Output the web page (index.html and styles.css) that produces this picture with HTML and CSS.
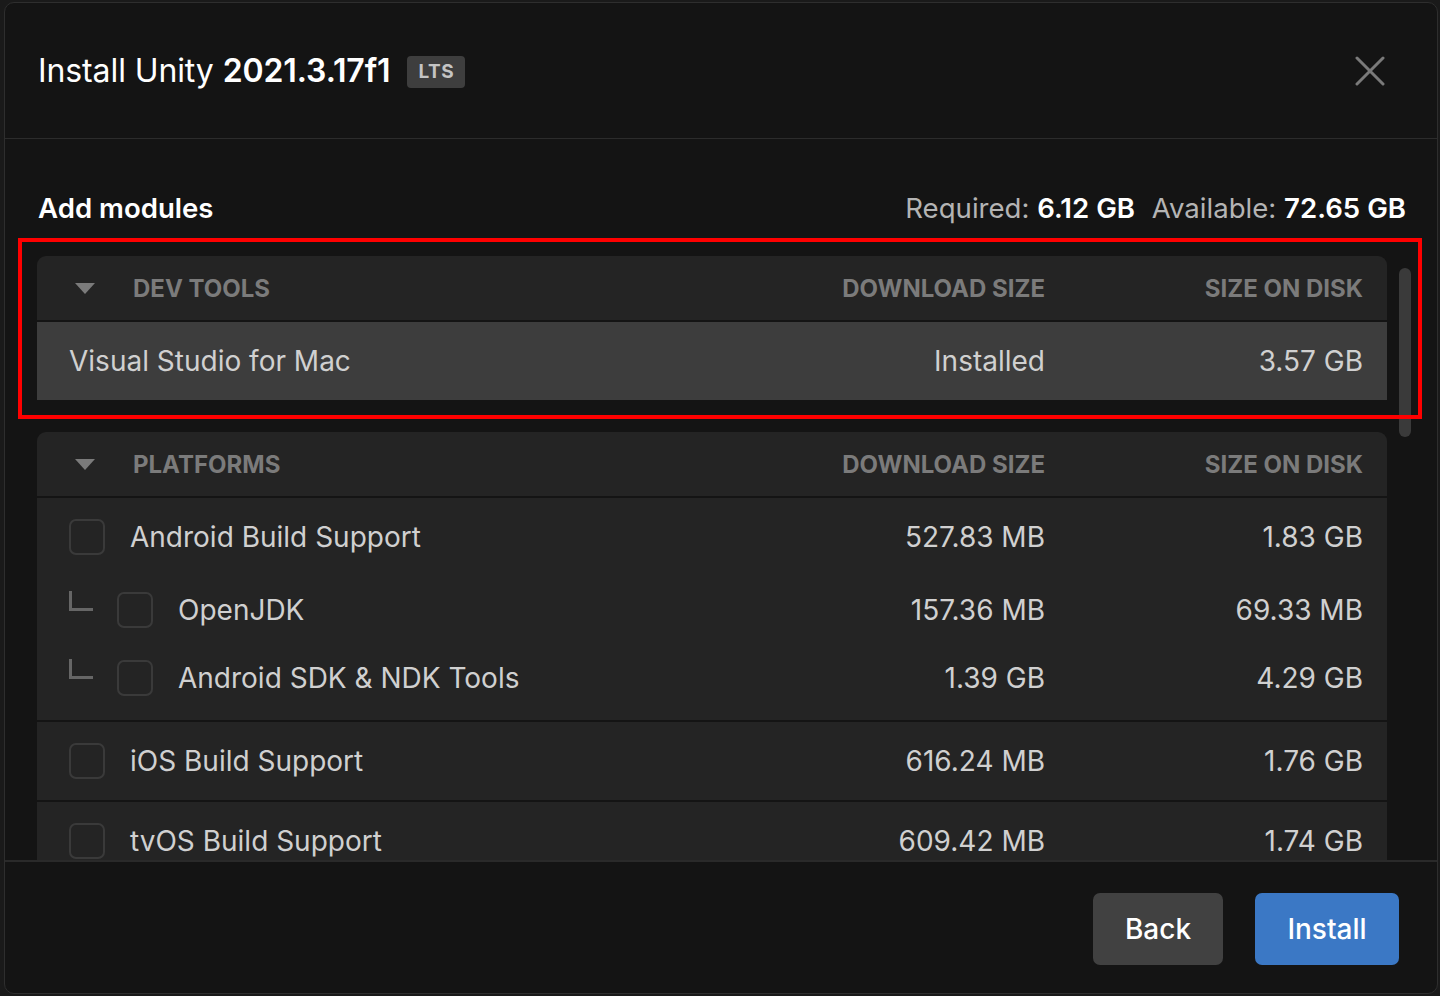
FILE: index.html
```html
<!DOCTYPE html>
<html lang="en">
<head>
<meta charset="utf-8">
<title>Install Unity 2021.3.17f1</title>
<link rel="stylesheet" href="styles.css">
</head>
<body>
<div class="dialog">
  <header class="dlg-header">
    <h1 class="title"><span class="title-light">Install Unity</span> <span class="title-bold">2021.3.17f1</span></h1>
    <span class="badge">LTS</span>
    <button class="close" aria-label="Close">
      <svg width="30" height="30" viewBox="0 0 30 30"><path d="M2 2 L28 28 M28 2 L2 28" stroke="#7a7a7a" stroke-width="3" stroke-linecap="round" fill="none"/></svg>
    </button>
  </header>

  <main class="content">
    <div class="summary">
      <h2 class="summary-title">Add modules</h2>
      <div class="space">
        <span class="lbl">Required:</span> <b>6.12 GB</b>
        <span class="lbl avail">Available:</span> <b>72.65 GB</b>
      </div>
    </div>

    <section class="card">
      <div class="card-head row-grid">
        <div class="head-name"><span class="caret"></span>DEV TOOLS</div>
        <div class="col">DOWNLOAD SIZE</div>
        <div class="col">SIZE ON DISK</div>
      </div>
      <div class="group">
        <div class="item selected row-grid">
          <div class="name plain">Visual Studio for Mac</div>
          <div class="col">Installed</div>
          <div class="col">3.57 GB</div>
        </div>
      </div>
    </section>

    <section class="card">
      <div class="card-head row-grid">
        <div class="head-name"><span class="caret"></span>PLATFORMS</div>
        <div class="col">DOWNLOAD SIZE</div>
        <div class="col">SIZE ON DISK</div>
      </div>
      <div class="group group-nested">
        <div class="item row-grid">
          <div class="name"><span class="check"></span>Android Build Support</div>
          <div class="col">527.83 MB</div>
          <div class="col">1.83 GB</div>
        </div>
        <div class="item sub row-grid">
          <div class="name"><span class="tree"></span><span class="check"></span>OpenJDK</div>
          <div class="col">157.36 MB</div>
          <div class="col">69.33 MB</div>
        </div>
        <div class="item sub row-grid">
          <div class="name"><span class="tree"></span><span class="check"></span>Android SDK &amp; NDK Tools</div>
          <div class="col">1.39 GB</div>
          <div class="col">4.29 GB</div>
        </div>
      </div>
      <div class="group">
        <div class="item row-grid">
          <div class="name"><span class="check"></span>iOS Build Support</div>
          <div class="col">616.24 MB</div>
          <div class="col">1.76 GB</div>
        </div>
      </div>
      <div class="group">
        <div class="item row-grid">
          <div class="name"><span class="check"></span>tvOS Build Support</div>
          <div class="col">609.42 MB</div>
          <div class="col">1.74 GB</div>
        </div>
      </div>
    </section>

    <div class="scroll-thumb"></div>
  </main>

  <footer class="dlg-footer">
    <button class="btn btn-secondary">Back</button>
    <button class="btn btn-primary">Install</button>
  </footer>

  <div class="highlight"></div>
</div>
</body>
</html>
```

FILE: styles.css
```css
* { box-sizing: border-box; }

html, body {
  margin: 0;
  padding: 0;
  height: 100%;
}

body {
  background: #1a1a1a;
  font-family: Inter, "Noto Sans", "Liberation Sans", sans-serif;
  color: #d0d0d0;
  overflow: hidden;
  padding: 2px 2px 2px 4px;
}

.dialog {
  position: relative;
  height: 992px;
  background: #141414;
  border: 1px solid #2e2e2e;
  border-radius: 10px;
  display: flex;
  flex-direction: column;
  overflow: hidden;
}

.dlg-header {
  height: 136px;
  flex: none;
  display: flex;
  align-items: center;
  padding: 0 52px 0 33px;
  border-bottom: 1px solid #2c2c2c;
}

.title {
  margin: 0;
  font-size: 32px;
  font-weight: 400;
  color: #ffffff;
  letter-spacing: -0.1px;
}

.title-bold { font-weight: 600; }

.badge {
  margin-left: 17px;
  background: #3e3e3e;
  color: #c4c4c4;
  font-size: 19px;
  font-weight: 700;
  letter-spacing: 0.5px;
  height: 32px;
  line-height: 32px;
  padding: 0 11px;
  border-radius: 4px;
  margin-top: 2px;
}

.close {
  margin-left: auto;
  background: none;
  border: 0;
  padding: 0;
  width: 30px;
  height: 30px;
  display: flex;
  cursor: pointer;
}

.content {
  position: relative;
  flex: 1;
  overflow: hidden;
  padding: 50px 32px 0 32px;
}

.summary {
  display: flex;
  justify-content: space-between;
  align-items: center;
  height: 38px;
  margin-bottom: 29px;
  padding-left: 1px;
}

.summary-title {
  margin: 0;
  font-size: 27.6px;
  font-weight: 600;
  color: #ffffff;
}

.space {
  font-size: 27.6px;
  color: #ffffff;
  margin-right: -1px;
}

.space b { font-weight: 600; }
.space .lbl { color: #b4b4b4; }
.space .avail { margin-left: 9px; }

.card {
  width: 1350px;
  display: flex;
  flex-direction: column;
  gap: 2px;
  margin-bottom: 32px;
}

.row-grid {
  display: grid;
  grid-template-columns: 1fr 320px 318px;
  align-items: center;
  padding-right: 24px;
}

.card-head {
  height: 64px;
  background: #242424;
  border-radius: 9px 9px 0 0;
  font-size: 24px;
  font-weight: 700;
  color: #7b7b7b;
}

.head-name {
  display: flex;
  align-items: center;
  padding-left: 38px;
}

.caret {
  width: 0;
  height: 0;
  border-left: 10px solid transparent;
  border-right: 10px solid transparent;
  border-top: 11px solid #7b7b7b;
  margin-right: 38px;
}

.col { text-align: right; }

.group {
  background: #242424;
}

.group-nested { padding-bottom: 8px; }

.item {
  height: 78px;
  font-size: 28px;
  color: #d0d0d0;
}

.item.sub { height: 68px; }

.item.selected { background: #3d3d3d; }

.name {
  display: flex;
  align-items: center;
  padding-left: 32px;
}

.name.plain { padding-left: 32px; }

.check {
  width: 36px;
  height: 36px;
  border: 2px solid #3a3a3a;
  border-radius: 7px;
  margin-right: 25px;
  flex: none;
}

.tree {
  width: 24px;
  height: 20px;
  border-left: 3px solid #666666;
  border-bottom: 3px solid #666666;
  margin-right: 24px;
  margin-top: -18px;
  flex: none;
}

.scroll-thumb {
  position: absolute;
  left: 1394px;
  top: 129px;
  width: 12px;
  height: 169px;
  border-radius: 6px;
  background: #3a3a3a;
}

.dlg-footer {
  height: 133px;
  flex: none;
  border-top: 2px solid #2a2a2a;
  display: flex;
  align-items: center;
  justify-content: flex-end;
  gap: 32px;
  padding: 2px 38px 0 0;
}

.btn {
  height: 72px;
  border: 0;
  border-radius: 7px;
  font-family: inherit;
  font-size: 28px;
  font-weight: 500;
  color: #ffffff;
  cursor: pointer;
}

.btn-secondary { width: 130px; background: #414141; }
.btn-primary { width: 144px; background: #3b78c5; }

.highlight {
  position: absolute;
  left: 13px;
  top: 235px;
  width: 1404px;
  height: 181px;
  border: 4px solid #ff0000;
  pointer-events: none;
}
```
